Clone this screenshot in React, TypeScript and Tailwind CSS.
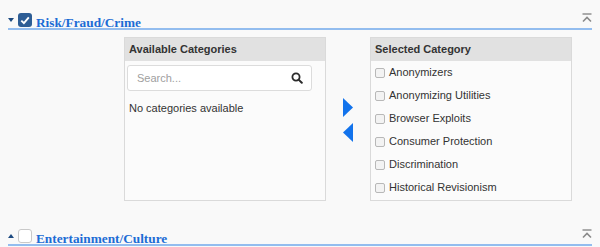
import React from "react";

const sans = { fontFamily: '"Liberation Sans", Arial, sans-serif' };
const serif = { fontFamily: '"Liberation Serif", "Times New Roman", serif' };

function CollapseIcon() {
  return (
    <svg width="10" height="10" viewBox="0 0 10 10" className="block">
      <line x1="0.5" y1="1" x2="9.5" y2="1" stroke="#8a8a8a" strokeWidth="1.4" />
      <polyline points="1,8.5 5,4.5 9,8.5" fill="none" stroke="#8a8a8a" strokeWidth="1.6" />
    </svg>
  );
}

function SectionHeader({ title, open, checked }: { title: string; open: boolean; checked: boolean }) {
  return (
    <div className="mx-[8px] flex h-[16px] items-center border-b-2 border-[#93bdef] box-content">
      <svg width="6" height="4" viewBox="0 0 6 4" className="mr-[4px] block">
        {open ? <polygon points="0,0 6,0 3,4" fill="#1d4a80" /> : <polygon points="0,4 6,4 3,0" fill="#1d4a80" />}
      </svg>
      {checked ? (
        <div className="flex h-[14px] w-[14px] items-center justify-center rounded-[3px] bg-[#2d5d95]">
          <svg width="10" height="9" viewBox="0 0 10 9">
            <polyline points="1.3,4.6 3.9,7.2 8.8,1.4" fill="none" stroke="#ffffff" strokeWidth="1.9" />
          </svg>
        </div>
      ) : (
        <div className="h-[14px] w-[14px] rounded-[3px] border border-[#c9c9c9] bg-white" />
      )}
      <span
        className="ml-[4px] mt-[5px] text-[13.3px] font-bold leading-[16px] text-[#1c6cd5]"
        style={serif}
      >
        {title}
      </span>
      <div className="ml-auto mt-[-4px]">
        <CollapseIcon />
      </div>
    </div>
  );
}

const items = [
  "Anonymizers",
  "Anonymizing Utilities",
  "Browser Exploits",
  "Consumer Protection",
  "Discrimination",
  "Historical Revisionism",
];

export default function App() {
  return (
    <div className="h-[247px] w-[600px] overflow-hidden bg-[#f9f9f9] pt-[12px]" style={sans}>
      <SectionHeader title="Risk/Fraud/Crime" open checked />
      <div className="ml-[124px] mt-[7px] flex">
        <div className="flex h-[164px] w-[202px] flex-col border border-[#dadada] bg-[#fbfbfb]">
          <div className="flex h-[23px] items-center bg-[#e1e1e1] px-[4px] text-[11px] font-bold text-[#333]">
            Available Categories
          </div>
          <div className="ml-[2px] mt-[4px] flex h-[26px] w-[185px] items-center rounded-[3px] border border-[#dcdcdc] bg-white pl-[9px] pr-[8px]">
            <span className="text-[11px] text-[#a0a0a0]">Search...</span>
            <svg width="12" height="12" viewBox="0 0 12 12" className="ml-auto">
              <circle cx="5" cy="5" r="3.6" fill="none" stroke="#2b2b2b" strokeWidth="1.8" />
              <line x1="7.6" y1="7.6" x2="10.8" y2="10.8" stroke="#2b2b2b" strokeWidth="2" strokeLinecap="round" />
            </svg>
          </div>
          <div className="ml-[4px] mt-[9px] text-[11px] text-[#333]">No categories available</div>
        </div>
        <div className="flex w-[44px] flex-col items-center justify-center gap-[6px] pt-[2px]">
          <svg width="10" height="19" viewBox="0 0 10 19" className="block">
            <polygon points="0,0 10,9.5 0,19" fill="#1273ec" />
          </svg>
          <svg width="10" height="19" viewBox="0 0 10 19" className="block">
            <polygon points="10,0 0,9.5 10,19" fill="#1273ec" />
          </svg>
        </div>
        <div className="flex h-[164px] w-[202px] flex-col border border-[#dadada] bg-[#fbfbfb]">
          <div className="flex h-[23px] items-center bg-[#e1e1e1] px-[4px] text-[11px] font-bold text-[#333]">
            Selected Category
          </div>
          {items.map((it) => (
            <div key={it} className="flex h-[23px] items-center pl-[4px] text-[11px] text-[#333]">
              <div className="mr-[4px] h-[10px] w-[10px] rounded-[2px] border border-[#b8b8b8] bg-[#f3f3f3]" />
              {it}
            </div>
          ))}
        </div>
      </div>
      <div className="mt-[27px]">
        <SectionHeader title="Entertainment/Culture" open={false} checked={false} />
      </div>
    </div>
  );
}
